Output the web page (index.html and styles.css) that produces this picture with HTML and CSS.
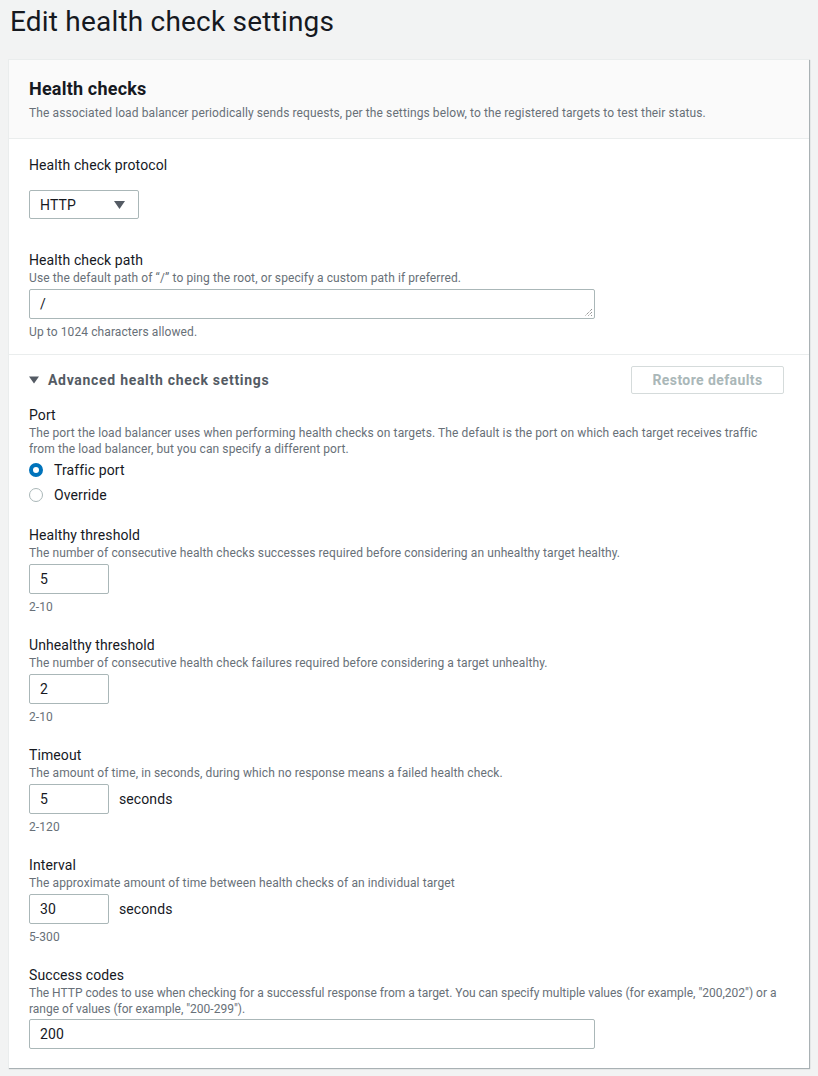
FILE: index.html
```html
<!DOCTYPE html>
<html>
<head>
<meta charset="utf-8">
<link rel="stylesheet" href="styles.css">
</head>
<body>
<h1 class="page-title">Edit health check settings</h1>
<div class="card">
  <div class="card-header">
    <h2 class="card-title">Health checks</h2>
    <p class="desc">The associated load balancer periodically sends requests, per the settings below, to the registered targets to test their status.</p>
  </div>
  <div class="section basic">
    <div class="field protocol">
      <div class="label">Health check protocol</div>
      <div class="select">
        <span>HTTP</span>
        <svg class="caret" width="11" height="8" viewBox="0 0 11 8"><path d="M0 0H11L5.5 8Z" fill="#545b64"/></svg>
      </div>
    </div>
    <div class="field">
      <div class="label">Health check path</div>
      <div class="desc">Use the default path of “/” to ping the root, or specify a custom path if preferred.</div>
      <div class="textarea">
        <span>/</span>
        <svg class="grip" width="9" height="9" viewBox="0 0 9 9"><path d="M8 1L1 8M8 4L4 8M8 7L7 8" stroke="#6b6b6b" stroke-width="1" stroke-dasharray="1 1" fill="none"/></svg>
      </div>
      <div class="hint">Up to 1024 characters allowed.</div>
    </div>
  </div>
  <div class="section advanced">
    <div class="adv-head">
      <div class="adv-title">
        <svg width="10" height="8" viewBox="0 0 10 8"><path d="M0 0.5H10L5 7.5Z" fill="#545b64"/></svg>
        <span>Advanced health check settings</span>
      </div>
      <button class="btn-disabled">Restore defaults</button>
    </div>
    <div class="field port">
      <div class="label">Port</div>
      <div class="desc">The port the load balancer uses when performing health checks on targets. The default is the port on which each target receives traffic from the load balancer, but you can specify a different port.</div>
      <div class="radios">
        <div class="radio-row"><span class="radio checked"></span><span>Traffic port</span></div>
        <div class="radio-row"><span class="radio"></span><span>Override</span></div>
      </div>
    </div>
    <div class="field">
      <div class="label">Healthy threshold</div>
      <div class="desc">The number of consecutive health checks successes required before considering an unhealthy target healthy.</div>
      <div class="input-row"><div class="input small">5</div></div>
      <div class="hint">2-10</div>
    </div>
    <div class="field">
      <div class="label">Unhealthy threshold</div>
      <div class="desc">The number of consecutive health check failures required before considering a target unhealthy.</div>
      <div class="input-row"><div class="input small">2</div></div>
      <div class="hint">2-10</div>
    </div>
    <div class="field">
      <div class="label">Timeout</div>
      <div class="desc">The amount of time, in seconds, during which no response means a failed health check.</div>
      <div class="input-row"><div class="input small">5</div><span class="unit">seconds</span></div>
      <div class="hint">2-120</div>
    </div>
    <div class="field">
      <div class="label">Interval</div>
      <div class="desc">The approximate amount of time between health checks of an individual target</div>
      <div class="input-row"><div class="input small">30</div><span class="unit">seconds</span></div>
      <div class="hint">5-300</div>
    </div>
    <div class="field last">
      <div class="label">Success codes</div>
      <div class="desc">The HTTP codes to use when checking for a successful response from a target. You can specify multiple values (for example, "200,202") or a range of values (for example, "200-299").</div>
      <div class="input-row"><div class="input wide">200</div></div>
    </div>
  </div>
</div>
</body>
</html>
```

FILE: styles.css
```css
* { box-sizing: border-box; }
html, body { margin: 0; padding: 0; }
body {
  background: #f2f3f3;
  font-family: Roboto, "Noto Sans", sans-serif;
  color: #16191f;
  width: 818px;
  padding: 0 9px 8px 8px;
  letter-spacing: 0.1px;
}
.page-title {
  margin: 0;
  padding: 4px 0 0 2px;
  height: 59px;
  font-size: 28px;
  line-height: 36px;
  font-weight: 400;
  color: #16191f;
  letter-spacing: 0.2px;
}
.card {
  background: #fff;
  border-left: 1px solid #eaeded;
  border-top: 1px solid #eaeded;
  box-shadow: 1px 1px 1px 0 rgba(0, 28, 36, 0.3);
}
.card-header {
  background: #fafafa;
  border-bottom: 1px solid #eaeded;
  padding: 18px 20px 17px 20px;
}
.card-title {
  margin: 0;
  font-size: 18px;
  line-height: 22px;
  font-weight: 700;
  letter-spacing: 0.2px;
}
.card-header .desc { margin: 5px 0 0; }
.desc {
  font-size: 12px;
  line-height: 16px;
  color: #687078;
}
.port .desc { max-width: 740px; }
.last .desc { letter-spacing: 0; }
.hint {
  font-size: 12px;
  line-height: 16px;
  color: #687078;
  margin-top: 5px;
}
.label {
  font-size: 14px;
  line-height: 20px;
  color: #16191f;
}
.section { padding: 16px 20px 14px 20px; }
.section.basic { border-bottom: 1px solid #eaeded; }
.section.advanced { padding: 11px 20px 19px 20px; }
.field { margin-bottom: 20px; }
.field.last { margin-bottom: 0; }
.basic .field:last-child { margin-bottom: 0; }
.field.protocol { margin-bottom: 31px; }
.protocol .select { margin-top: 15px; }
.select {
  width: 110px;
  height: 29px;
  border: 1px solid #aab7b8;
  border-radius: 2px;
  display: flex;
  align-items: center;
  justify-content: space-between;
  padding: 0 13px 0 10px;
  font-size: 14px;
}
.caret { display: block; }
.textarea {
  margin-top: 3px;
  width: 566px;
  height: 30px;
  border: 1px solid #aab7b8;
  border-radius: 2px;
  display: flex;
  justify-content: space-between;
  align-items: flex-end;
  padding: 0 1px 1px 10px;
  font-size: 14px;
}
.textarea span { align-self: center; }
.grip { display: block; }
.adv-head {
  display: flex;
  align-items: center;
  justify-content: space-between;
  height: 28px;
  margin-bottom: 11px;
}
.adv-title {
  display: flex;
  align-items: center;
  gap: 9px;
  font-size: 14px;
  font-weight: 700;
  color: #545b64;
  letter-spacing: 0.7px;
}
.adv-title svg { display: block; }
.btn-disabled {
  width: 153px;
  height: 28px;
  margin-right: 5px;
  background: #fff;
  border: 1px solid #d5dbdb;
  border-radius: 2px;
  font-family: inherit;
  font-size: 14px;
  font-weight: 700;
  color: #aab7b8;
  padding: 0;
  letter-spacing: 0.4px;
}
.port { margin-bottom: 18px; }
.radios { margin-top: 0; }
.radio-row {
  display: flex;
  align-items: center;
  gap: 11px;
  height: 25px;
  font-size: 14px;
}
.radio {
  width: 14px;
  height: 14px;
  border-radius: 50%;
  border: 1px solid #aab7b8;
  background: #fff;
}
.radio.checked {
  border: 4px solid #0073bb;
}
.input-row {
  display: flex;
  align-items: center;
  margin-top: 3px;
}
.last .input-row { margin-top: 2px; }
.input {
  height: 30px;
  border: 1px solid #aab7b8;
  border-radius: 2px;
  padding: 0 10px;
  display: flex;
  align-items: center;
  font-size: 14px;
}
.input.small { width: 80px; }
.input.wide { width: 566px; }
.unit {
  margin-left: 10px;
  font-size: 14px;
}
```
